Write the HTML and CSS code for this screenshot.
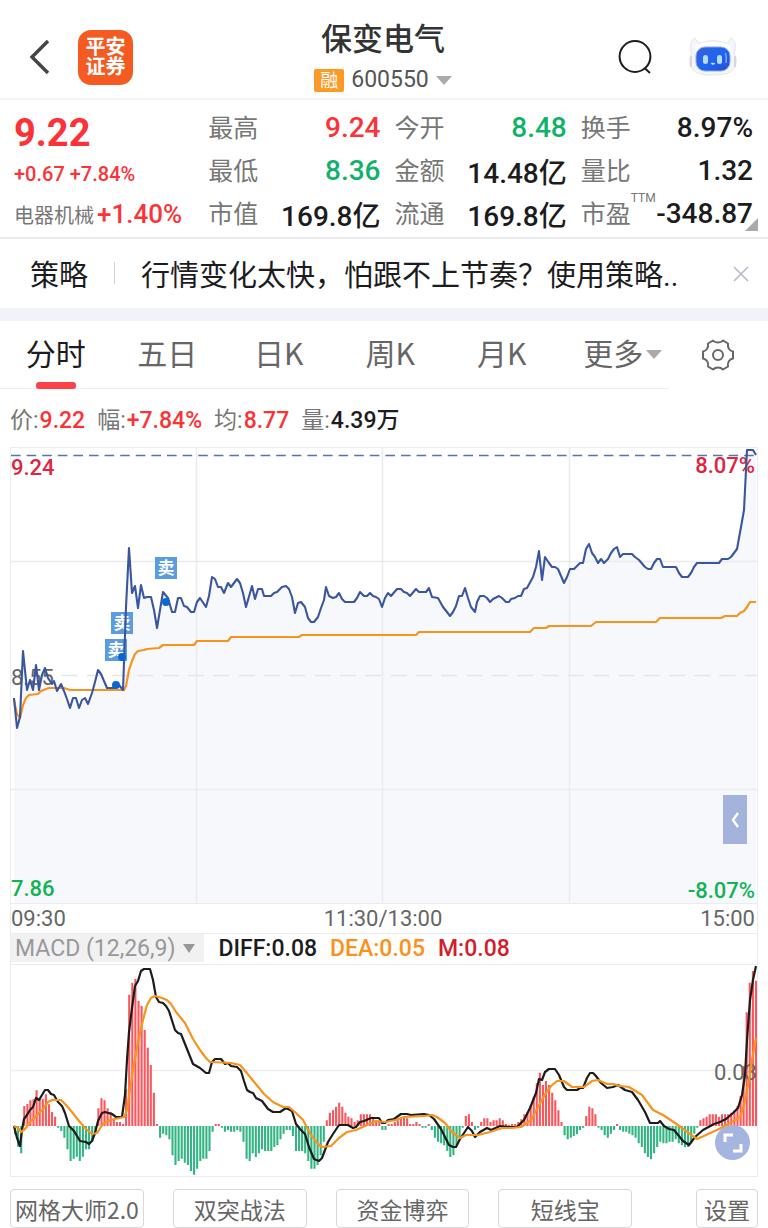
FILE: index.html
```html
<!DOCTYPE html>
<html lang="zh-CN">
<head>
<meta charset="utf-8">
<meta name="viewport" content="width=device-width, initial-scale=1">
<title>保变电气 600550</title>
<link rel="stylesheet" href="styles.css">
</head>
<body>
<header class="topbar">
  <div class="topbar-side">
    <button class="icon-btn back" aria-label="返回">
      <svg width="22" height="38" viewBox="0 0 22 38"><path d="M19 3 3 19 19 35" fill="none" stroke="#444" stroke-width="3.4"/></svg>
    </button>
    <div class="logo"><span>平安</span><span>证券</span></div>
  </div>
  <div class="title-block">
    <h1 class="stock-name">保变电气</h1>
    <button class="stock-code"><span class="margin-tag">融</span><span>600550</span><i class="caret"></i></button>
  </div>
  <div class="topbar-side topbar-right">
    <button class="icon-btn" aria-label="搜索">
      <svg width="36" height="36" viewBox="0 0 36 36"><g fill="none" stroke="#1d1d1f" stroke-width="2"><circle cx="18" cy="17.500" r="15.400"/><path d="m27.500 29 5.500 5"/></g></svg>
    </button>
    <button class="icon-btn" aria-label="智能助手">
      <svg width="48" height="40" viewBox="0 0 48 40">
        <defs><linearGradient id="face" x1="0" y1="0" x2="1" y2="1"><stop offset="0" stop-color="#3a62d8"/><stop offset=".5" stop-color="#1f66ef"/><stop offset="1" stop-color="#2450cc"/></linearGradient></defs>
        <path d="M3 17C0 9 2 2 6 1c2 3 2 5 7 5C18 3 30 3 35 6c5 0 5-2 7-5 4 1 6 8 3 16 3 2 3 13 0 14-3 6-11 7-21 7S6 37 3 31c-3-1-3-12 0-14Z" fill="#f5f6f9" stroke="#e4e6ec"/>
        <path d="M7 12C12 5 36 5 41 12" fill="none" stroke="#fff" stroke-width="4"/>
        <path d="M2 19v11M46 19v11" stroke="#d9d4dd" stroke-width="2"/>
        <rect x="7" y="10" width="34" height="24" rx="9" fill="url(#face)" stroke="#90a8e8"/>
        <rect x="14" y="18" width="5" height="9" rx="2.500" fill="#b9daff"/><rect x="28" y="18" width="5" height="9" rx="2.500" fill="#b9daff"/>
        <path d="M22.500 26q1.500 2 3 0" fill="none" stroke="#cde4ff" stroke-width="1.500"/><path d="M36 16q2 2 1 10" fill="none" stroke="#7ca6f8" stroke-width="1.500"/>
      </svg>
    </button>
  </div>
</header>

<section class="quote">
  <div class="price-col">
    <div class="price">9.22</div>
    <div class="change">+0.67 +7.84%</div>
    <div class="sector"><span>电器机械</span><b>+1.40%</b></div>
  </div>
  <dl class="stats">
    <div><dt>最高</dt><dd class="up">9.24</dd></div>
    <div><dt>最低</dt><dd class="down">8.36</dd></div>
    <div><dt>市值</dt><dd>169.8亿</dd></div>
  </dl>
  <dl class="stats">
    <div><dt>今开</dt><dd class="down">8.48</dd></div>
    <div><dt>金额</dt><dd>14.48亿</dd></div>
    <div><dt>流通</dt><dd>169.8亿</dd></div>
  </dl>
  <dl class="stats">
    <div><dt>换手</dt><dd>8.97%</dd></div>
    <div><dt>量比</dt><dd>1.32</dd></div>
    <div><dt>市盈<sup>TTM</sup></dt><dd>-348.87</dd></div>
  </dl>
  <i class="corner"></i>
</section>

<section class="notice">
  <strong class="notice-tag">策略</strong>
  <a class="notice-text" href="#">行情变化太快，怕跟不上节奏？使用策略..</a>
  <button class="icon-btn" aria-label="关闭"><svg width="16" height="16" viewBox="0 0 16 16"><path d="m1 1 14 14M15 1 1 15" stroke="#b9bac8" stroke-width="1.600"/></svg></button>
</section>

<nav class="tabs">
  <div class="tab-list">
    <button class="tab active">分时</button>
    <button class="tab">五日</button>
    <button class="tab">日K</button>
    <button class="tab">周K</button>
    <button class="tab">月K</button>
    <button class="tab">更多<i class="caret"></i></button>
  </div>
  <button class="icon-btn gear" aria-label="图表设置">
    <svg width="34" height="34" viewBox="0 0 34 34"><g fill="none" stroke="#666" stroke-width="2"><path stroke-linejoin="round" d="M12 2.500q1.500 2 5 2t5-2l5 3q-.5 3.500 1 5.500t4 2.500v7q-2.500.5-4 2.500t-1 5.500l-5 3q-2-2-5-2t-5 2l-5-3q.5-3.500-1-5.500t-4-2.500v-7q2.500-.5 4-2.500t1-5.500Z"/><circle cx="17" cy="17" r="5"/></g></svg>
  </button>
</nav>

<div class="readout">
  <span>价:<b class="up">9.22</b></span>
  <span>幅:<b class="up">+7.84%</b></span>
  <span>均:<b class="up">8.77</b></span>
  <span>量:<b>4.39万</b></span>
</div>

<main class="charts">
  <div class="chart">
    <svg class="plot" viewBox="11 448 746 455" role="img" aria-label="分时走势">
      <path id="price-area" fill="#f6f8fc"/>
      <path d="M11 561.500H757M11 789.500H757M196.500 448V903M382.500 448V903M569.500 448V903" stroke="#e9ebef" stroke-width="1.500" fill="none"/>
      <path d="M11 675.500H757" stroke="#e3e5e9" stroke-width="1.500" stroke-dasharray="16 9.300"/>
      <path d="M11 455.500H757" stroke="#5673b5" stroke-width="1.500" stroke-dasharray="9.600 6"/>
      <text class="axis up-dark" x="11" y="475">9.24</text>
      <text class="axis up-dark" x="755" y="473" text-anchor="end">8.07%</text>
      <text class="axis muted" x="11" y="685">8.55</text>
      <text class="axis down-dark" x="11" y="896">7.86</text>
      <text class="axis down-dark" x="755" y="898" text-anchor="end">-8.07%</text>
      <polyline fill="none" stroke="#f7941d" stroke-width="2.200" stroke-linejoin="round" points="14,700 17,714 20,718 23,705 26,698 29,695 38,694 41,691 46,689 49,688 64,688 70,690 124,690 126,686 129,670 132,661 135,654 138,651 144,650 147,649 159,648 163,645 194,645 197,641 228,641 231,637 299,637 302,635 416,635 419,632 530,632 534,628 546,628 549,626 591,626 596,622 656,622 660,618 721,618 725,616 737,616 740,613 744,611 747,607 750,602 756,602"/>
      <g class="sell"><rect x="155" y="557" width="22" height="22"/><rect x="111" y="612" width="22" height="22"/><rect x="105" y="639" width="22" height="22"/>
      <text x="166" y="574">卖</text><text x="122" y="629">卖</text><text x="116" y="656">卖</text></g>
      <polyline id="price-line" fill="none" stroke="#3a569f" stroke-width="2.100" stroke-linejoin="round" points="14,698 17,728 20,717 23,651 27,690 30,680 33,690 36,665 39,690 42,675 45,668 48,678 52,684 54,681 57,691 61,684 64,691 67,699 70,708 73,698 76,698 79,708 82,700 85,698 88,704 92,693 95,682 98,670 101,674 107,688 115,688 119,685 123,690 126,607 129,548 132,593 135,586 138,608 141,585 144,598 147,597 151,597 154,610 157,628 160,610 163,592 168,598 172,612 175,612 178,598 181,598 184,606 187,607 191,612 194,612 197,602 200,598 206,607 209,596 212,577 215,579 218,587 221,587 224,593 228,583 231,587 237,579 240,583 243,593 246,607 252,586 255,599 258,589 262,589 264,596 271,596 274,593 277,592 282,587 286,586 289,589 292,597 295,613 298,603 301,602 305,607 308,618 311,622 314,622 318,617 321,608 324,600 326,587 329,596 333,598 336,597 339,593 342,599 345,602 354,602 357,598 360,592 364,596 367,596 370,593 373,596 376,597 379,599 382,607 385,598 388,593 391,596 397,589 401,589 404,592 407,593 410,596 416,589 419,592 426,592 429,588 432,597 438,598 443,607 447,612 450,616 453,612 456,606 459,596 462,596 465,588 468,598 471,607 475,612 477,602 480,596 484,596 487,598 490,602 493,599 499,596 502,598 506,602 509,602 511,599 515,598 518,596 521,596 524,589 527,588 533,577 536,567 539,551 542,580 545,557 549,563 552,567 555,567 558,569 564,583 567,577 570,569 574,569 576,567 580,563 583,563 586,549 589,544 592,553 595,557 598,563 601,559 604,563 608,559 611,553 614,549 617,547 620,557 623,554 632,554 635,557 639,560 645,567 648,569 651,569 654,563 657,559 660,559 663,567 676,567 679,573 682,577 688,577 691,573 694,567 697,563 719,563 722,559 728,559 731,557 737,549 741,527 744,510 747,450 753,450 756,455"/>
      <g fill="#0b67d0"><circle cx="166" cy="602" r="4"/><circle cx="122" cy="657" r="4"/><circle cx="116" cy="685" r="4"/></g>
    </svg>
    <button class="drawer" aria-label="展开盘口"><svg width="10" height="18" viewBox="0 0 10 18"><path d="M8 2 3 9l5 7" fill="none" stroke="#fff" stroke-width="2.400"/></svg></button>
  </div>

  <div class="times"><span>09:30</span><span>11:30/13:00</span><span>15:00</span></div>

  <div class="indicator">
    <button class="indicator-pick">MACD (12,26,9)<i class="caret small"></i></button>
    <span>DIFF:0.08</span><span class="dea">DEA:0.05</span><span class="macd">M:0.08</span>
  </div>

  <div class="chart">
    <svg class="plot" viewBox="11 965 746 211" role="img" aria-label="MACD">
      <path d="M11 1070.500H757" stroke="#eeeff2" stroke-width="1.500"/>
      <path id="bars-up" stroke="#f9575c" stroke-width="2.100"/>
      <path id="bars-down" stroke="#32b483" stroke-width="2.100"/>
      <text class="axis muted" x="757" y="1080" text-anchor="end">0.03</text>
      <polyline fill="none" stroke="#1c1c1c" stroke-width="2.200" stroke-linejoin="round" points="14,1126 17,1138 20,1146 22,1130 24,1119 27,1115 30,1110 33,1107 36,1098 39,1100 42,1095 45,1090 48,1090 51,1094 54,1095 58,1102 62,1106 65,1113 69,1126 74,1131 80,1141 86,1142 89,1144 92,1141 95,1133 98,1121 102,1113 105,1112 112,1114 116,1117 122,1117 125,1095 127,1060 129,1032 132,1008 135,986 138,981 141,971 144,969 150,969 153,980 156,997 159,1002 163,1003 166,1006 169,1011 175,1030 178,1033 181,1034 187,1049 193,1064 200,1068 206,1073 209,1073 212,1062 215,1059 221,1059 225,1064 228,1063 231,1066 237,1067 241,1071 244,1081 247,1090 250,1092 253,1093 256,1098 262,1101 268,1109 273,1112 280,1112 286,1108 292,1111 296,1124 300,1129 305,1134 309,1147 314,1159 319,1161 322,1158 328,1142 333,1134 339,1125 348,1125 353,1128 356,1127 360,1122 364,1121 371,1118 379,1118 382,1123 385,1123 388,1120 394,1119 401,1114 407,1114 411,1115 424,1114 429,1115 434,1119 441,1129 449,1145 453,1147 456,1147 460,1139 468,1127 472,1131 475,1137 480,1132 487,1128 491,1130 500,1126 509,1127 517,1127 524,1120 530,1108 536,1093 539,1079 542,1080 545,1072 549,1069 555,1069 559,1075 564,1087 567,1090 577,1090 580,1088 583,1088 587,1078 590,1073 593,1073 596,1076 601,1083 607,1088 613,1087 618,1085 625,1090 632,1092 638,1100 645,1112 650,1123 658,1123 660,1121 664,1126 669,1129 674,1130 683,1141 689,1145 695,1137 703,1130 714,1124 720,1122 726,1119 733,1113 738,1108 742,1095 745,1075 747,1040 750,1000 753,980 756,966"/>
      <polyline fill="none" stroke="#f7941d" stroke-width="2.200" stroke-linejoin="round" points="14,1126 18,1128 21,1132 25,1129 30,1122 37,1115 43,1109 48,1102 52,1100 61,1100 66,1105 72,1112 79,1121 86,1129 92,1134 97,1133 103,1124 110,1120 120,1118 124,1117 127,1110 130,1090 133,1070 138,1042 143,1020 147,1005 151,998 155,996 162,998 167,1000 171,1004 176,1012 185,1023 193,1039 200,1050 206,1058 210,1062 231,1063 240,1065 246,1072 255,1083 264,1094 273,1102 283,1107 289,1107 296,1113 303,1120 311,1135 318,1144 322,1147 331,1146 339,1138 347,1132 356,1130 367,1125 376,1121 385,1122 396,1120 404,1117 424,1116 432,1115 437,1117 445,1123 452,1132 460,1138 466,1135 478,1135 490,1132 502,1128 512,1128 521,1127 531,1120 537,1109 544,1096 551,1086 557,1081 564,1081 572,1087 584,1087 592,1081 598,1080 607,1084 613,1084 620,1086 629,1087 642,1095 653,1110 663,1115 675,1123 686,1131 697,1139 706,1135 719,1129 732,1122 740,1117 744,1105 749,1080 752,1060 756,1038"/>
    </svg>
    <button class="expand" aria-label="全屏"><svg width="20" height="20" viewBox="0 0 20 20"><path d="M2 9V2h8M18 11v7h-8" fill="none" stroke="#fff" stroke-width="3"/></svg></button>
  </div>
</main>

<footer class="tools">
  <div class="tool-list">
    <button class="tool">网格大师2.0</button>
    <button class="tool">双突战法</button>
    <button class="tool">资金博弈</button>
    <button class="tool">短线宝</button>
  </div>
  <button class="tool">设置</button>
</footer>
<script src="chart.js"></script>
</body>
</html>
```

FILE: styles.css
```css
* { box-sizing: border-box; }

body {
  margin: 0;
  background: #fff;
  color: #1c1c1e;
  font-family: Roboto, "Noto Sans CJK SC", sans-serif;
}

button {
  margin: 0;
  padding: 0;
  border: 0;
  background: none;
  color: inherit;
  font: inherit;
}

h1, dl, dd { margin: 0; }
svg { display: block; }

.up { color: #fb3338; }
.down { color: #10b26b; }

.caret {
  border: 8px solid transparent;
  border-top: 9px solid #aaa;
  border-bottom: 0;
}
.caret.small { border-width: 9px 6px 0; border-top-color: #98989c; }

.icon-btn { display: flex; flex: none; }

.topbar {
  display: grid;
  grid-template-columns: 1fr auto 1fr;
  height: 100px;
  padding: 0 31px 0 29px;
  border-bottom: 2px solid #f4f4f6;
}
.topbar-side { display: flex; align-items: center; gap: 27px; padding-top: 14px; }
.topbar-right { justify-content: flex-end; gap: 36px; }
.logo {
  display: flex;
  flex-direction: column;
  justify-content: center;
  width: 55px;
  height: 55px;
  border-radius: 13px;
  background: #f45a21;
  color: #fff;
  font-size: 20px;
  font-weight: 700;
  line-height: 20px;
  text-align: center;
}
.title-block {
  display: flex;
  flex-direction: column;
  align-items: center;
  padding-top: 20px;
}
.stock-name { font-size: 31px; font-weight: 500; line-height: 40px; color: #333; }
.stock-code {
  display: flex;
  align-items: center;
  gap: 7px;
  font-size: 23px;
  line-height: 40px;
  color: #555;
}
.margin-tag {
  padding: 0 6px;
  border-radius: 2px;
  background: #fc9a27;
  color: #fff;
  font-size: 18px;
  line-height: 23px;
}

.quote {
  position: relative;
  display: grid;
  grid-template-columns: 180fr 172fr 172fr 172fr;
  gap: 14px;
  height: 139px;
  padding: 6px 15px 0 14px;
  border-bottom: 2px solid #ebebef;
}
.price-col { color: #fb3338; font-weight: 500; white-space: nowrap; }
.price { font-size: 38px; font-weight: 700; line-height: 54px; }
.change { font-size: 20px; line-height: 28px; }
.sector { display: flex; align-items: center; height: 52px; font-size: 26px; }
.sector span { color: #777; font-size: 20px; font-weight: 400; }
.sector b { margin-left: 3px; font-weight: 500; }
.stats div {
  display: flex;
  align-items: center;
  justify-content: space-between;
  height: 43px;
  white-space: nowrap;
}
.stats dt { position: relative; padding-bottom: 4px; color: #777; font-size: 25px; }
.stats dd { font-size: 28px; font-weight: 500; }
.stats sup { position: absolute; left: 100%; top: -6px; font-size: 12px; line-height: 20px; }
.corner {
  position: absolute;
  right: 10px;
  bottom: 6px;
  border-left: 13px solid transparent;
  border-bottom: 13px solid #aaa;
}

.notice {
  display: flex;
  align-items: center;
  height: 82px;
  padding: 0 19px 0 30px;
  border-bottom: 13px solid #f2f3f8;
  font-size: 29px;
}
.notice-tag {
  display: flex;
  align-items: center;
  margin-right: 26px;
  font-weight: 400;
}
.notice-tag::after { content: ""; width: 1px; height: 22px; margin-left: 26px; background: #d2d3d8; }
.notice-tag, .notice-text { padding-bottom: 2px; }
.notice-text { flex: 1; color: inherit; text-decoration: none; white-space: nowrap; }

.tabs { display: flex; align-items: center; height: 68px; }
.tab-list {
  display: grid;
  flex: 1;
  grid-template-columns: repeat(6, 1fr);
  height: 68px;
  border-bottom: 1px solid #ececf0;
}
.tab {
  position: relative;
  display: flex;
  align-items: center;
  justify-content: center;
  padding-bottom: 6px;
  color: #666;
  font-family: "Noto Sans CJK SC", sans-serif;
  font-size: 30px;
}
.tab .caret { margin: 6px -19px 0 3px; }
.tab.active { color: #1c1c1e; }
.tab.active::after {
  content: "";
  position: absolute;
  left: calc(50% - 20px);
  bottom: -1px;
  width: 40px;
  height: 7px;
  border-radius: 3px;
  background: #fb4347;
}
.gear { padding: 0 33px 0 32px; }

.readout {
  display: flex;
  align-items: center;
  gap: 12px;
  height: 58px;
  color: #777;
  padding: 0 10px;
  font-size: 23px;
}
.readout b { margin-left: 1px; font-weight: 500; }
.readout b:not(.up) { color: #1c1c1e; }

.charts { margin: 0 10px; border: 1px solid #ececf0; }
.chart { position: relative; }
.plot { width: 100%; height: auto; }
.axis { font-size: 22px; font-weight: 500; }
.up-dark { fill: #e0233f; }
.down-dark { fill: #12b355; }
.muted { fill: #666; font-weight: 400; }
.sell rect { fill: #5b9cdf; }
.sell text { fill: #fff; font-size: 17px; font-weight: 700; text-anchor: middle; }
.drawer {
  position: absolute;
  right: 10px;
  bottom: 59px;
  display: grid;
  place-items: center;
  width: 24px;
  height: 49px;
  background: #a3b3dc;
}
.times {
  display: grid;
  grid-template-columns: 1fr auto 1fr;
  padding: 1px 2px 0 0;
  border: solid #ececf0;
  border-width: 1px 0;
  color: #666;
  font-size: 22px;
  line-height: 28px;
}
.times span:last-child { text-align: right; }
.indicator {
  display: flex;
  align-items: center;
  gap: 13px;
  height: 31px;
  padding-bottom: 2px;
  border-bottom: 1px solid #ececf0;
  font-size: 23px;
  font-weight: 500;
}
.indicator-pick {
  display: flex;
  align-items: center;
  gap: 7px;
  height: 28px;
  margin-right: 2px;
  padding: 0 9px 0 4px;
  background: #f1f1f2;
  color: #98989c;
  font-weight: 400;
}
.dea { color: #fb911b; }
.macd { color: #d61c2c; }
.expand {
  position: absolute;
  right: 7px;
  bottom: 16px;
  display: grid;
  place-items: center;
  width: 35px;
  height: 35px;
  border-radius: 50%;
  background: #a5b5df;
}

.tools { display: flex; gap: 64px; padding: 12px 10px 0; }
.tool-list { display: grid; flex: 1; grid-template-columns: repeat(4, 1fr); gap: 29px; }
.tool {
  height: 39px;
  padding: 0 7px;
  border: 1px solid #d9d9dc;
  border-radius: 4px;
  color: #666;
  font-family: "Noto Sans CJK SC", sans-serif;
  font-size: 23px;
  line-height: 36px;
  white-space: nowrap;
}
.tool-list .tool { padding: 0; }
```

FILE: chart.js
```js
// MACD histogram, one value per bar, in thirds of a chart unit
const bars = [
  -25,-62,-82,60,66,77,80,107,85,82,95,65,42,28,-5,-15,-35,-70,-105,-98,-92,-105,-92,-70,-70,-45,-18,
  53,83,77,53,42,22,12,12,6,110,394,430,441,376,360,288,235,183,100,6,-35,-23,-28,-40,-88,-117,-105,-98,
  -110,-117,-135,-146,-128,-105,-98,-98,-75,-17,6,6,-5,-17,-12,-17,-17,-12,-17,-47,-98,-105,-82,-93,
  -82,-70,-75,-75,-75,-63,-58,-40,-23,-12,-12,-30,-75,-75,-75,-82,-105,-128,-128,-117,-88,-47,
  17,40,47,58,70,58,40,28,23,12,17,35,35,35,35,28,17,12,-12,-12,6,6,12,17,23,28,23,6,6,12,6,-5,-5,6,
  -12,-35,-47,-52,-58,-75,-93,-88,-58,-35,-5,30,35,12,-12,-5,12,23,23,12,17,17,23,17,6,
  3,6,6,12,20,35,42,60,88,128,160,123,135,123,100,77,47,12,-28,-40,-35,-30,-25,-12,-5,30,58,53,35,-5,
  -12,-28,-35,-23,-12,6,-12,-17,-17,-23,-28,-35,-52,-63,-82,-93,-100,-82,-63,-47,-52,-52,-47,-47,-40,
  -52,-58,-63,-63,-52,-23,-5,17,23,28,35,35,35,28,35,35,35,40,47,60,90,180,341,430,465,436
];
const left = 15, right = 756, baseline = 1126;
const step = (right - left) / (bars.length - 1);

function barPath(keep) {
  return bars
    .map((v, i) => keep(v) ? `M${(left + i * step).toFixed(1)} ${baseline}v${(-v / 3).toFixed(1)}` : "")
    .join("");
}
document.getElementById("bars-up").setAttribute("d", barPath(v => v > 0));
document.getElementById("bars-down").setAttribute("d", barPath(v => v < 0));

// Shaded area under the price line
const line = document.getElementById("price-line").getAttribute("points");
document.getElementById("price-area").setAttribute("d", `M14 903L${line} 756,903Z`);
```
